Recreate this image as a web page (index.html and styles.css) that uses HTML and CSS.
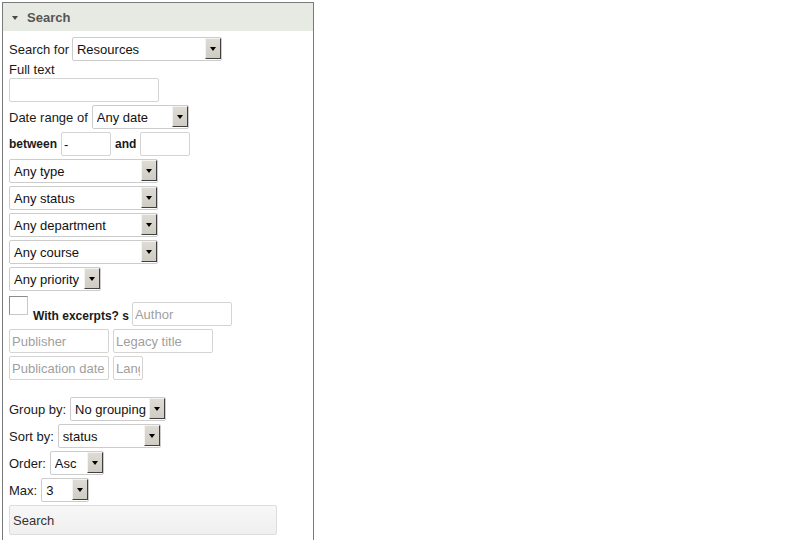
FILE: index.html
```html
<!DOCTYPE html>
<html>
<head>
<meta charset="utf-8">
<link rel="stylesheet" href="styles.css">
</head>
<body>
<div class="panel">
  <div class="panel-head"><span class="tri"></span><span class="head-title">Search</span></div>
  <form class="panel-body">
    <div class="row r-first">
      <label class="lbl">Search for</label>
      <div class="sel w150 tight"><select><option>Resources</option></select><span class="arrow"></span></div>
    </div>
    <div class="line-label">Full text</div>
    <div class="row"><input class="txt w150" type="text"></div>
    <div class="row r-gap">
      <label class="lbl">Date range of</label>
      <div class="sel w97"><select><option>Any date</option></select><span class="arrow"></span></div>
    </div>
    <div class="row r-gap">
      <label class="lbl b">between</label>
      <input class="txt w50" type="text" value="-">
      <label class="lbl b">and</label>
      <input class="txt w50" type="text">
    </div>
    <div class="row r-gap"><div class="sel w149"><select><option>Any type</option></select><span class="arrow"></span></div></div>
    <div class="row r-gap"><div class="sel w149"><select><option>Any status</option></select><span class="arrow"></span></div></div>
    <div class="row r-gap"><div class="sel w149"><select><option>Any department</option></select><span class="arrow"></span></div></div>
    <div class="row r-gap"><div class="sel w149"><select><option>Any course</option></select><span class="arrow"></span></div></div>
    <div class="row r-gap"><div class="sel w92"><select><option>Any priority</option></select><span class="arrow"></span></div></div>
    <div class="row r-check">
      <input class="chk" type="checkbox">
      <label class="lbl b chk-lbl">With excerpts? s</label>
      <input class="txt w100 author" type="text" placeholder="Author">
    </div>
    <div class="row r-gap pair">
      <input class="txt w100" type="text" placeholder="Publisher">
      <input class="txt w100" type="text" placeholder="Legacy title">
    </div>
    <div class="row r-gap pair">
      <input class="txt w100" type="text" placeholder="Publication date">
      <input class="txt w30" type="text" placeholder="Language">
    </div>
    <div class="row r-group">
      <label class="lbl">Group by:</label>
      <div class="sel w96"><select><option>No grouping</option></select><span class="arrow"></span></div>
    </div>
    <div class="row r-gap">
      <label class="lbl">Sort by:</label>
      <div class="sel w103"><select><option>status</option></select><span class="arrow"></span></div>
    </div>
    <div class="row r-gap">
      <label class="lbl">Order:</label>
      <div class="sel w54"><select><option>Asc</option></select><span class="arrow"></span></div>
    </div>
    <div class="row r-gap">
      <label class="lbl">Max:</label>
      <div class="sel w48"><select><option>3</option></select><span class="arrow"></span></div>
    </div>
    <button class="btn" type="button">Search</button>
  </form>
</div>
</body>
</html>
```
FILE: styles.css
```css
html, body {
  margin: 0;
  padding: 0;
  background: #ffffff;
}
body {
  font-family: "Liberation Sans", Arial, sans-serif;
  font-size: 13px;
  color: #1a1a1a;
}
.panel {
  margin: 2px 0 0 2px;
  width: 310px;
  height: 560px;
  border: 1px solid #7a7a7a;
  border-bottom: none;
}
.panel-head {
  height: 28px;
  background: #e7e9e3;
  display: flex;
  align-items: center;
  padding-left: 9px;
  box-sizing: border-box;
}
.tri {
  width: 0;
  height: 0;
  border-left: 3.5px solid transparent;
  border-right: 3.5px solid transparent;
  border-top: 4px solid #4a4a4a;
  margin-right: 9px;
  margin-top: 1px;
}
.head-title {
  font-weight: bold;
  font-size: 13px;
  color: #555555;
}
.panel-body {
  padding: 6px 0 0 6px;
  display: flex;
  flex-direction: column;
  align-items: flex-start;
}
.row {
  display: flex;
  align-items: center;
  gap: 4px;
  height: 24px;
}
.r-gap { margin-top: 3px; }
.r-group { margin-top: 17px; }
.pair { gap: 4px; }
.tight { margin-left: -1px; }
.line-label {
  height: 17px;
  line-height: 17px;
  box-sizing: border-box;
}
.lbl { white-space: nowrap; }
.b { font-weight: bold; font-size: 12px; }
.sel {
  position: relative;
  height: 24px;
  box-sizing: border-box;
}
.sel select {
  appearance: none;
  -webkit-appearance: none;
  width: 100%;
  height: 100%;
  box-sizing: border-box;
  border: 1px solid #cccccc;
  border-radius: 2px;
  background: #ffffff;
  font-family: "Liberation Sans", Arial, sans-serif;
  font-size: 13px;
  color: #111111;
  padding: 0 0 0 4px;
  margin: 0;
}
.arrow {
  position: absolute;
  top: 1px;
  right: 1px;
  width: 16px;
  bottom: 2px;
  box-sizing: border-box;
  background: linear-gradient(#dedbd4, #cfccc4);
  border-top: 1px solid #f4f3f0;
  border-left: 1px solid #f4f3f0;
  border-right: 1px solid #404040;
  border-bottom: 1px solid #404040;
  display: flex;
  align-items: center;
  justify-content: center;
}
.arrow::after {
  content: "";
  width: 0;
  height: 0;
  border-left: 3.5px solid transparent;
  border-right: 3.5px solid transparent;
  border-top: 4px solid #000000;
}
.txt {
  height: 24px;
  box-sizing: border-box;
  border: 1px solid #d4d4d4;
  border-radius: 2px;
  font-family: "Liberation Sans", Arial, sans-serif;
  font-size: 13px;
  color: #111111;
  padding: 0 2px;
  margin: 0;
  background: #ffffff;
}
.txt::placeholder { color: #a0a0a0; }
.w30 { width: 30px; }
.w48 { width: 48px; }
.w50 { width: 50px; }
.w54 { width: 54px; }
.w92 { width: 92px; }
.w96 { width: 96px; }
.w97 { width: 97px; }
.w100 { width: 100px; }
.w103 { width: 103px; }
.w149 { width: 149px; }
.w150 { width: 150px; }
.r-check {
  height: 32px;
  margin-top: 3px;
  align-items: flex-start;
  gap: 0;
}
.chk {
  appearance: none;
  -webkit-appearance: none;
  width: 19px;
  height: 19px;
  margin: 2px 0 0 0;
  border: 1px solid #8c8c8c;
  border-right-color: #c8c8c8;
  border-bottom-color: #c8c8c8;
  background: #ffffff;
  box-sizing: border-box;
}
.chk-lbl {
  margin: 15px 0 0 5px;
  line-height: 14px;
}
.author {
  margin: 8px 0 0 3px;
  height: 24px;
}
.btn {
  margin-top: 3px;
  width: 268px;
  height: 30px;
  box-sizing: border-box;
  text-align: left;
  padding: 0 0 0 3px;
  border: 1px solid #dddddd;
  border-radius: 2px;
  background: linear-gradient(#f7f7f7, #efefef);
  font-family: "Liberation Sans", Arial, sans-serif;
  font-size: 13px;
  color: #333333;
}
```
